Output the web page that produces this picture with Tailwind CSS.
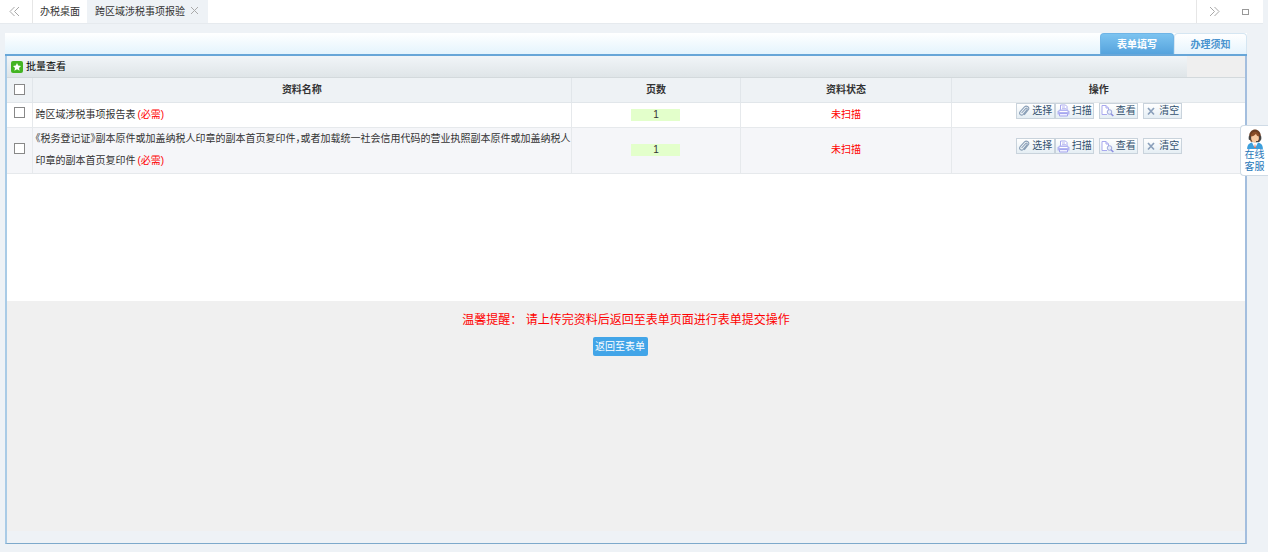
<!DOCTYPE html>
<html lang="zh-CN">
<head>
<meta charset="utf-8">
<meta name="viewport" content="width=device-width, initial-scale=1">
<title>跨区域涉税事项报验</title>
<script src="https://cdn.jsdelivr.net/npm/@tailwindcss/browser@4"></script>
</head>
<body class="flex min-h-screen flex-col bg-[#eef2f6] font-['Liberation_Sans','Noto_Sans_CJK_SC',sans-serif] text-[10px] leading-4 text-[#333]">
<svg class="hidden" aria-hidden="true">
  <symbol id="clip" viewBox="0 0 12 12"><path d="M3.6 8 7.600 3.600c1-1 2.200.2 1.300 1.300L5.200 9.300C3.400 11.200.4 9 2.200 6.700L6.500 1.900C8.600-.1 12.300 2.500 10.200 5L6.200 9.800" fill="none" stroke="#8ba0b8" stroke-width="1.100"/></symbol>
  <symbol id="print" viewBox="0 0 13 13"><path d="M3.500 6V1h5l1.500 1.500V6" fill="#fff" stroke="#a9a9ee"/><path d="M5 3h3M5 4.700h4" stroke="#b5b5f0"/><path d="M2.500 5.500h8l2 2V10.500h-12V7.500z" fill="#b4b5f2"/><path d="M2.500 7.500h8" stroke="#fff"/><path d="M2.500 9.500h8v2.500h-8z" fill="#f0f0ff" stroke="#a5a6ee"/></symbol>
  <symbol id="view" viewBox="0 0 13 13"><path d="M6 10.500H1v-9h4L7.500 4v2" fill="#fff" stroke="#a9a9ee"/><path d="M5 1.500V4h2.500" fill="none" stroke="#a9a9ee"/><circle cx="8.500" cy="8" r="2.300" fill="#e6ecfb" stroke="#9fa9dc"/><path d="m10 9.700 2.300 2.300" stroke="#8d8fe0" stroke-width="1.600"/></symbol>
  <symbol id="cross" viewBox="0 0 12 12"><path d="m3 3 6 6.500M9 3 3 9.500" stroke="#8ba0bb" stroke-width="1.700"/></symbol>
</svg>

<nav class="mr-[5px] flex h-6 items-stretch border-b border-[#e6eaee] bg-white" aria-label="页签">
  <button class="flex w-8 items-center justify-center pr-1" aria-label="向左滚动"><svg class="size-[11px]" viewBox="0 0 11 11" fill="none" stroke="#a8a8a8"><path d="M5.500 1 1 5.500 5.500 10M10 1 5.500 5.500 10 10"/></svg></button>
  <a href="#" class="flex items-center border-l border-[#e6e6e6] px-[7px]">办税桌面</a>
  <div class="flex items-center gap-[6px] bg-[#eef2f6] pl-2 pr-[10px]">
    <a href="#" aria-current="page">跨区域涉税事项报验</a>
    <button class="pb-[2px]" aria-label="关闭"><svg class="size-[7px]" viewBox="0 0 7 7" stroke="#aaa"><path d="m0 0 7 7M7 0 0 7"/></svg></button>
  </div>
  <div class="ml-auto flex border-l border-[#e6e6e6]">
    <button class="flex w-[34px] items-center justify-center" aria-label="向右滚动"><svg class="size-[11px]" viewBox="0 0 11 11" fill="none" stroke="#a8a8a8"><path d="m1 1 4.500 4.500L1 10M5.500 1 10 5.500 5.500 10"/></svg></button>
    <button class="flex w-8 items-center justify-center pr-1" aria-label="全屏"><span class="h-[6px] w-[7px] border border-[#999]"></span></button>
  </div>
</nav>

<main class="mb-2 ml-[5px] mr-[21px] mt-[9px] flex grow flex-col">
  <div class="flex h-[23px] items-end justify-end border-b-2 border-[#67a6d8] bg-linear-to-b from-white to-[#e4f4fd] font-bold">
    <button class="h-[21px] w-[74px] rounded-t-sm border border-b-0 border-[#6eb4e6] bg-linear-to-b from-[#7cc3f0] to-[#55a3dd] pt-[2px] text-white">表单填写</button>
    <button class="h-[21px] w-[73px] rounded-t-sm border border-b-0 border-[#d5e6f2] bg-linear-to-b from-white to-[#e6f4fd] pt-[2px] text-[#4a94cf]">办理须知</button>
  </div>
  <div class="flex grow flex-col border-x-2 border-b border-l-[#a9cbe6] border-r-[#a3bede] border-b-[#7da9cb]">
    <section class="min-h-[245px] bg-white">
      <div class="flex h-[22px] border-b border-[#d3d9dc] bg-[#efefef]">
        <div class="mr-[58px] flex grow items-center bg-linear-to-b from-[#f1f5f8] to-[#dfe5e8]">
          <button class="flex items-center gap-[3px] pl-1 text-black">
            <svg class="size-3" viewBox="0 0 12 12"><rect width="12" height="12" rx="2" fill="#43b422"/><path d="m6 2 1.200 2.600 2.800.3-2 2 .6 2.800L6 8.300 3.400 9.700 4 6.900l-2-2 2.800-.3z" fill="#fff"/></svg>批量查看
          </button>
        </div>
      </div>
      <table class="w-full table-fixed border-collapse">
        <colgroup><col class="w-[25px]"><col class="w-[43.6%]"><col class="w-[13.6%]"><col class="w-[17.1%]"><col></colgroup>
        <thead class="bg-[#eef2f5]">
          <tr class="h-6 border-b border-[#e1e6ea]">
            <th class="border-r border-[#e1e6ea]"><input type="checkbox" aria-label="全选" class="block size-[11px] mx-auto appearance-none border border-[#888] bg-white checked:bg-[#4a94cf]"></th>
            <th class="border-r border-[#e1e6ea]">资料名称</th>
            <th class="border-r border-[#e1e6ea]">页数</th>
            <th class="border-r border-[#e1e6ea]">资料状态</th>
            <th>操作</th>
          </tr>
        </thead>
        <tbody>
          <tr class="h-[25px] border-b border-[#e6e9ec]">
            <td class="border-r border-[#e6e9ec] pb-1"><input type="checkbox" aria-label="跨区域涉税事项报告表" class="block size-[11px] mx-auto appearance-none border border-[#888] bg-white checked:bg-[#4a94cf]"></td>
            <td class="border-r border-[#e6e9ec] pl-[3px]">跨区域涉税事项报告表<span class="pl-[2px] text-[#f00]">(必需)</span></td>
            <td class="border-r border-[#e6e9ec]"><input type="text" value="1" aria-label="页数" class="mx-auto block h-3 w-[49px] bg-[#e3ffcb] text-center leading-3"></td>
            <td class="border-r border-[#e6e9ec] text-center text-[#f00]">未扫描</td>
            <td class="pb-2">
              <div class="flex justify-center gap-[5px] text-[#34526f]">
                <div class="flex">
                  <button class="flex h-4 w-[39px] items-center justify-center gap-[2px] border border-[#c9d3dc] bg-linear-to-b from-white to-[#e5eef4]"><svg class="size-3"><use href="#clip"/></svg>选择</button>
                  <button class="flex h-4 w-[39px] items-center justify-center gap-[2px] border border-[#c9d3dc] bg-linear-to-b from-white to-[#e5eef4]"><svg class="size-[13px]"><use href="#print"/></svg>扫描</button>
                </div>
                <button class="flex h-4 w-[39px] items-center justify-center gap-[2px] border border-[#c9d3dc] bg-linear-to-b from-white to-[#e5eef4]"><svg class="size-[13px]"><use href="#view"/></svg>查看</button>
                <button class="flex h-4 w-[39px] items-center justify-center gap-[2px] border border-[#c9d3dc] bg-linear-to-b from-white to-[#e5eef4]"><svg class="size-3"><use href="#cross"/></svg>清空</button>
              </div>
            </td>
          </tr>
          <tr class="h-[46px] border-b border-[#e6e9ec] bg-[#f5f6f9]">
            <td class="border-r border-[#e6e9ec] pb-1"><input type="checkbox" aria-label="税务登记证副本原件" class="block size-[11px] mx-auto appearance-none border border-[#888] bg-white checked:bg-[#4a94cf]"></td>
            <td class="border-r border-[#e6e9ec] pl-[3px] leading-[22px]"><span class="[font-feature-settings:'halt']">《税务登记证》副本原件或加盖纳税人印章的副本首页复印件，或者加载统一社会信用代码的营业执照副本原件或加盖纳税人印章的副本首页复印件</span><span class="pl-[2px] text-[#f00]">(必需)</span></td>
            <td class="border-r border-[#e6e9ec]"><input type="text" value="1" aria-label="页数" class="mx-auto block h-3 w-[49px] bg-[#e3ffcb] text-center leading-3"></td>
            <td class="border-r border-[#e6e9ec] text-center text-[#f00]">未扫描</td>
            <td class="pb-2">
              <div class="flex justify-center gap-[5px] text-[#34526f]">
                <div class="flex">
                  <button class="flex h-4 w-[39px] items-center justify-center gap-[2px] border border-[#c9d3dc] bg-linear-to-b from-white to-[#e5eef4]"><svg class="size-3"><use href="#clip"/></svg>选择</button>
                  <button class="flex h-4 w-[39px] items-center justify-center gap-[2px] border border-[#c9d3dc] bg-linear-to-b from-white to-[#e5eef4]"><svg class="size-[13px]"><use href="#print"/></svg>扫描</button>
                </div>
                <button class="flex h-4 w-[39px] items-center justify-center gap-[2px] border border-[#c9d3dc] bg-linear-to-b from-white to-[#e5eef4]"><svg class="size-[13px]"><use href="#view"/></svg>查看</button>
                <button class="flex h-4 w-[39px] items-center justify-center gap-[2px] border border-[#c9d3dc] bg-linear-to-b from-white to-[#e5eef4]"><svg class="size-3"><use href="#cross"/></svg>清空</button>
              </div>
            </td>
          </tr>
        </tbody>
      </table>
    </section>
    <section class="mb-3 flex grow flex-col items-center bg-[#f0f0f0] pr-3 pt-[11px]">
      <p class="pl-3 text-xs text-[#f00]">温馨提醒： 请上传完资料后返回至表单页面进行表单提交操作</p>
      <button class="mt-[9px] h-[19px] w-[55px] rounded-xs bg-[#42a5e8] text-white">返回至表单</button>
    </section>
  </div>
</main>

<a href="#" class="fixed right-0 top-[125px] flex w-7 flex-col items-center rounded-l-sm border border-r-0 border-[#cfdbe6] bg-white pb-[2px] pt-[3px] text-center leading-3 text-[#2576b9]">
  <svg class="size-5" viewBox="0 0 19 19"><path d="M2 19c0-5 3-6.500 7.500-6.500S17 14 17 19z" fill="#3d9fdc"/><path d="m6.500 12.500 3 6 3-6z" fill="#fff"/><path d="m9.500 14-.8 4h1.600z" fill="#d75a3a"/><path d="M4 8c-1-10 12-10 11 0l-1.500 4h-8z" fill="#6b3d22"/><ellipse cx="9.500" cy="8.500" rx="3.700" ry="4.500" fill="#f8c9a0"/><path d="M5.500 7c2 0 4-1 5-2.500 0 1.500 1.500 2.500 3 2.500 0-6-8-6-8 0z" fill="#8a4c26"/><rect x="3.500" y="6.500" width="2" height="4" rx="1" fill="#444"/><rect x="13.500" y="6.500" width="2" height="4" rx="1" fill="#444"/><path d="M14.500 10c0 1.500-2 2-4 2" fill="none" stroke="#444"/></svg>
  <span>在线<br>客服</span>
</a>
</body>
</html>
